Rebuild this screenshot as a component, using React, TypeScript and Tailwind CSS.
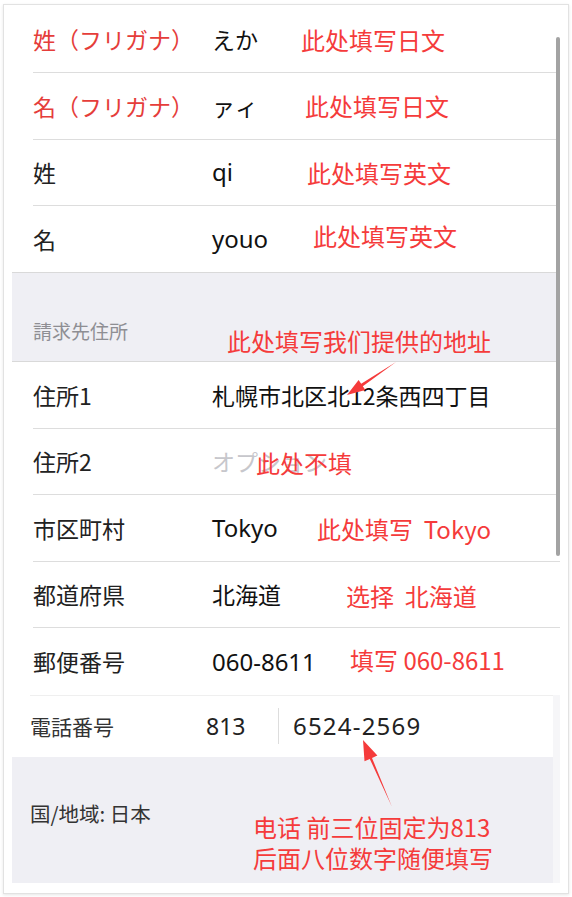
const jp = { fontFamily: '"Noto Sans CJK JP", "Noto Sans", sans-serif' };
const sc = { fontFamily: '"Noto Sans CJK SC", "Noto Sans", sans-serif' };
const latin = { fontFamily: '"Noto Sans", "Noto Sans CJK JP", sans-serif' };

const nameRows = [
  { label: "姓（フリガナ）", value: "えか", red: true },
  { label: "名（フリガナ）", value: "ァィ", red: true },
  { label: "姓", value: "qi", en: true },
  { label: "名", value: "youo", en: true },
];

const addressRows = [
  { label: "住所1", value: "札幌市北区北12条西四丁目" },
  { label: "住所2", value: "オプション", placeholder: true },
  { label: "市区町村", value: "Tokyo", en: true },
  { label: "都道府県", value: "北海道" },
  { label: "郵便番号", value: "060-8611", en: true, last: true },
];

const notes = [
  { text: "此处填写日文", x: 301, y: 28 },
  { text: "此处填写日文", x: 305, y: 94 },
  { text: "此处填写英文", x: 307, y: 161 },
  { text: "此处填写英文", x: 313, y: 224 },
  { text: "此处填写我们提供的地址", x: 227, y: 329 },
  { text: "此处不填", x: 256, y: 451 },
  { text: "此处填写  Tokyo", x: 317, y: 517 },
  { text: "选择  北海道", x: 346, y: 584 },
  { text: "填写 060-8611", x: 350, y: 648 },
  { text: "电话 前三位固定为813", x: 253, y: 815 },
  { text: "后面八位数字随便填写", x: 253, y: 846 },
];

function Row({
  label,
  value,
  red,
  en,
  placeholder,
  last,
  h,
}: {
  label: string;
  value: string;
  red?: boolean;
  en?: boolean;
  placeholder?: boolean;
  last?: boolean;
  h: string;
}) {
  return (
    <div className={`pl-[21px] ${h}`}>
      <div
        className={`flex h-full items-center ${last ? "" : "border-b border-[#dddddd]"}`}
        style={jp}
      >
        <span className={`w-[179px] text-[23px] ${red ? "text-[#e53d3a]" : "text-[#222]"}`}>
          {label}
        </span>
        <span
          className={`${en ? "text-[24px]" : "text-[23px]"} ${placeholder ? "text-[#c7c7cc]" : "text-[#111]"}`}
          style={en ? latin : jp}
        >
          {value}
        </span>
      </div>
    </div>
  );
}

export default function App() {
  return (
    <div className="relative h-[897px] w-[572px] overflow-hidden bg-white">
      <div className="ml-[3px] mt-[4px] h-[890px] w-[566px] border border-[#e2e2e2] bg-white pl-[8px] pt-[2px] shadow-[0_1px_3px_rgba(0,0,0,0.1)]">
        <div className="relative w-[548px]">
          {nameRows.map((r, i) => (
            <Row key={r.label} {...r} last={i === nameRows.length - 1} h="h-[66.25px]" />
          ))}

          <div className="flex h-[90px] items-end border-y border-[#d9d9d9] bg-[#efeff4] pb-[19px] pl-[21px]">
            <span className="text-[19px] leading-[22px] text-[#8e8e93]" style={jp}>
              請求先住所
            </span>
          </div>

          {addressRows.map((r) => (
            <Row key={r.label} {...r} h="h-[66.6px]" />
          ))}

          <div className="flex h-[62px]">
            <div className="flex w-[541px] items-stretch bg-white pl-[18px]">
              <div className="flex flex-1 items-center border-t border-[#efefef]" style={jp}>
                <span className="w-[176px] text-[21px] text-[#333]">電話番号</span>
                <span className="w-[72px] text-[23px] text-[#222]" style={latin}>
                  813
                </span>
                <span className="h-[36px] w-px bg-[#dddddd]" />
                <span className="pl-[14px] text-[24px] tracking-[1.2px] text-[#222]" style={latin}>
                  6524-2569
                </span>
              </div>
            </div>
            <div className="w-[7px] bg-[#f6f6f8]" />
          </div>

          <div className="flex h-[126px]">
            <div className="w-[541px] bg-[#efeff4] pl-[18px] pt-[43px]">
              <span className="text-[20.5px] leading-[26px] text-[#333]" style={jp}>
                国/地域: 日本
              </span>
            </div>
            <div className="w-[7px] bg-[#f6f6f8]" />
          </div>

          <div className="absolute left-[544px] top-[30px] h-[519px] w-[4px] rounded-full bg-[#a3a3a3]" />
        </div>
      </div>

      {notes.map((n) => (
        <span
          key={n.text + n.y}
          className="absolute whitespace-pre text-[24px] leading-[24px] text-[#f53b3b]"
          style={{ ...sc, left: n.x, top: n.y }}
        >
          {n.text}
        </span>
      ))}

      <svg className="absolute left-0 top-0" width="572" height="897" viewBox="0 0 572 897">
        <polygon
          fill="#f53b3b"
          points="396,362 362.8,386.2 365.4,390 347,395 358.6,380 361.2,383.8"
        />
        <polygon
          fill="#f53b3b"
          points="392,807 372,757.9 377.4,755.6 363,740 364.5,761.2 369.8,758.9"
        />
      </svg>
    </div>
  );
}
